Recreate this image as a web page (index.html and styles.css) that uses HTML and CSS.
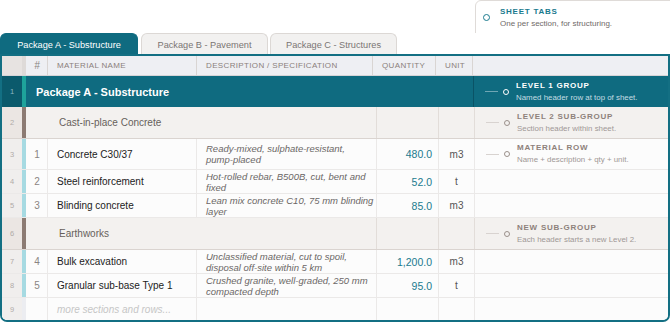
FILE: index.html
```html
<!DOCTYPE html>
<html>
<head>
<meta charset="utf-8">
<link rel="stylesheet" href="styles.css">
</head>
<body>
<div class="topbar">
  <div class="callout">
    <span class="dot dot-teal"></span>
    <div class="note">
      <div class="note-title t-teal">SHEET TABS</div>
      <div class="note-desc d-grey">One per section, for structuring.</div>
    </div>
  </div>
</div>
<div class="tabs">
  <div class="tab tab-a">Package A - Substructure</div>
  <div class="tab tab-b">Package B - Pavement</div>
  <div class="tab tab-c">Package C - Structures</div>
</div>
<div class="sheet">
  <div class="row r-head">
    <div class="c num"></div>
    <div class="c stripe"></div>
    <div class="c idx hash">#</div>
    <div class="c lbl">MATERIAL NAME</div>
    <div class="c lbl">DESCRIPTION / SPECIFICATION</div>
    <div class="c lbl">QUANTITY</div>
    <div class="c lbl">UNIT</div>
    <div class="c"></div>
  </div>

  <div class="row r-l1">
    <div class="c num">1</div>
    <div class="c stripe"></div>
    <div class="c l1-label">Package A - Substructure</div>
    <div class="c annot annot-l1">
      <span class="leader"></span><span class="dot"></span>
      <div class="note">
        <div class="note-title">LEVEL 1 GROUP</div>
        <div class="note-desc">Named header row at top of sheet.</div>
      </div>
    </div>
  </div>

  <div class="row r-l2">
    <div class="c num">2</div>
    <div class="c stripe"></div>
    <div class="c l2-label">Cast-in-place Concrete</div>
    <div class="c"></div>
    <div class="c"></div>
    <div class="c annot">
      <span class="leader"></span><span class="dot"></span>
      <div class="note">
        <div class="note-title">LEVEL 2 SUB-GROUP</div>
        <div class="note-desc">Section header within sheet.</div>
      </div>
    </div>
  </div>

  <div class="row r-mat r-tall">
    <div class="c num">3</div>
    <div class="c stripe"></div>
    <div class="c idx">1</div>
    <div class="c name">Concrete C30/37</div>
    <div class="c desc">Ready-mixed, sulphate-resistant,<br>pump-placed</div>
    <div class="c qty">480.0</div>
    <div class="c unit">m3</div>
    <div class="c annot">
      <span class="leader"></span><span class="dot"></span>
      <div class="note">
        <div class="note-title">MATERIAL ROW</div>
        <div class="note-desc">Name + description + qty + unit.</div>
      </div>
    </div>
  </div>

  <div class="row r-mat">
    <div class="c num">4</div>
    <div class="c stripe"></div>
    <div class="c idx">2</div>
    <div class="c name">Steel reinforcement</div>
    <div class="c desc">Hot-rolled rebar, B500B, cut, bent and<br>fixed</div>
    <div class="c qty">52.0</div>
    <div class="c unit">t</div>
    <div class="c"></div>
  </div>

  <div class="row r-mat">
    <div class="c num">5</div>
    <div class="c stripe"></div>
    <div class="c idx">3</div>
    <div class="c name">Blinding concrete</div>
    <div class="c desc">Lean mix concrete C10, 75 mm blinding<br>layer</div>
    <div class="c qty">85.0</div>
    <div class="c unit">m3</div>
    <div class="c"></div>
  </div>

  <div class="row r-l2">
    <div class="c num">6</div>
    <div class="c stripe"></div>
    <div class="c l2-label">Earthworks</div>
    <div class="c"></div>
    <div class="c"></div>
    <div class="c annot">
      <span class="leader"></span><span class="dot"></span>
      <div class="note">
        <div class="note-title">NEW SUB-GROUP</div>
        <div class="note-desc">Each header starts a new Level 2.</div>
      </div>
    </div>
  </div>

  <div class="row r-mat">
    <div class="c num">7</div>
    <div class="c stripe"></div>
    <div class="c idx">4</div>
    <div class="c name">Bulk excavation</div>
    <div class="c desc">Unclassified material, cut to spoil,<br>disposal off-site within 5 km</div>
    <div class="c qty">1,200.0</div>
    <div class="c unit">m3</div>
    <div class="c"></div>
  </div>

  <div class="row r-mat">
    <div class="c num">8</div>
    <div class="c stripe"></div>
    <div class="c idx">5</div>
    <div class="c name">Granular sub-base Type 1</div>
    <div class="c desc">Crushed granite, well-graded, 250 mm<br>compacted depth</div>
    <div class="c qty">95.0</div>
    <div class="c unit">t</div>
    <div class="c"></div>
  </div>

  <div class="row r-mat r-more">
    <div class="c num">9</div>
    <div class="c stripe"></div>
    <div class="c idx"></div>
    <div class="c name more">more sections and rows...</div>
    <div class="c desc"></div>
    <div class="c qty"></div>
    <div class="c unit"></div>
    <div class="c"></div>
  </div>
</div>
</body>
</html>
```

FILE: styles.css
```css
* { box-sizing: border-box; margin: 0; padding: 0; }

body {
  margin: 0;
  width: 670px;
  height: 324px;
  overflow: hidden;
  background: #ffffff;
  font-family: "Liberation Sans", Arial, Helvetica, sans-serif;
  color: #222;
}

/* ---------- callout ---------- */
.topbar {
  height: 33px;
  display: flex;
  padding-left: 475px;
  overflow: hidden;
}
.callout {
  flex: 1;
  margin-right: -8px;
  height: 44px;
  border: 1px solid #dfdbd8;
  border-radius: 6px;
  background: #fff;
  display: flex;
  align-items: flex-start;
  gap: 10px;
  padding: 5px 0 0 7px;
}
.callout .dot { margin-top: 8px; }

.note { display: flex; flex-direction: column; white-space: nowrap; }
.note-title {
  font-size: 8px;
  font-weight: bold;
  letter-spacing: 0.75px;
  line-height: 12px;
  color: #8e817b;
}
.note-desc {
  font-size: 7.9px;
  line-height: 12px;
  color: #9f9896;
}
.t-teal { color: #1a7a8e; }
.d-grey { color: #6f6a68; font-size: 8px; }

.dot {
  width: 6px;
  height: 6px;
  flex: none;
  border-radius: 50%;
  border: 1.2px solid #9b908b;
}
.dot-teal { border: 1.5px solid #1a7a8e; width: 7px; height: 7px; }

/* ---------- tabs ---------- */
.tabs {
  display: flex;
  gap: 3px;
  height: 21px;
}
.tab {
  height: 21px;
  border: 1px solid #dcd8d5;
  border-bottom: none;
  border-radius: 6px 6px 0 0;
  background: #f2f1f0;
  color: #7a7573;
  font-size: 9.2px;
  display: flex;
  align-items: center;
  justify-content: center;
  padding-top: 2px;
  white-space: nowrap;
}
.tab-a { width: 138px; background: #0f6b80; border-color: #0f6b80; color: #fff; }
.tab-b { width: 127px; }
.tab-c { width: 127px; margin-left: -1px; }

/* ---------- sheet ---------- */
.sheet {
  height: 268px;
  border: 2px solid #136f83;
  border-radius: 0 0 7px 7px;
  overflow: hidden;
  background: #fcfcfc;
}

.row {
  display: grid;
  grid-template-columns: 20px 4px 22px 149px 180px 62px 36px 1fr;
  align-items: stretch;
  border-bottom: 1px solid #ebe9e8;
}
.c {
  display: flex;
  align-items: center;
  min-width: 0;
  white-space: nowrap;
}
.num {
  justify-content: center;
  font-size: 7.5px;
  color: #b1aba8;
  background: #f0eeed;
}

/* header */
.r-head {
  height: 20px;
  grid-template-columns: 20px 4px 22px 149px 176px 63px 37px 1fr;
  background: #eeeff3;
  border-bottom: 1px solid #d6d4d7;
}
.r-head .num { background: #e7e3e1; }
.r-head .stripe { background: #dedad8; }
.r-head .c:nth-child(n+3):nth-child(-n+7) { border-right: 1px solid #d9d5d3; }
.lbl {
  padding-left: 9px;
  font-size: 8px;
  letter-spacing: 0.35px;
  color: #8b807b;
}
.hash { font-style: italic; font-size: 8px; color: #9c9592; }

/* level 1 */
.r-l1 {
  height: 31px;
  grid-template-columns: 20px 4px 447px 1fr;
  background: #0f6b80;
  border-bottom: none;
}
.r-l1 .num { background: #0b5a6c; color: #8db8c3; }
.r-l1 .stripe { background: #1ea39b; }
.l1-label {
  padding-left: 10px;
  font-size: 11px;
  font-weight: bold;
  color: #fff;
}
.annot-l1 { border-left: 1px solid #0a5366; padding-left: 13px; }
.r-l1 .leader { background: #6fa6b4; }
.r-l1 .dot { border-color: #ffffff; }
.r-l1 .note-title { color: #ffffff; }
.r-l1 .note-desc { color: #c4dde3; }

/* level 2 */
.r-l2 {
  height: 32px;
  grid-template-columns: 20px 4px 351px 62px 36px 1fr;
  background: #f3f1ef;
  border-bottom: 1px solid #dad4d0;
}
.r-l2 .num { background: #ebe6e3; }
.r-l2 .stripe { background: #8c7b73; }
.r-l2 .c:nth-child(n+3):nth-child(-n+5) { border-right: 1px solid #e2ddd9; }
.l2-label {
  padding-left: 33px;
  font-size: 10px;
  color: #675f5b;
}

/* material rows */
.r-mat { height: 24px; background: #fcfcfc; }
.r-tall { height: 31px; }
.r-mat .stripe { background: #a6dae2; }
.r-mat .c:nth-child(n+3):nth-child(-n+7) { border-right: 1px solid #ebe9e8; }
.idx {
  justify-content: center;
  font-size: 10px;
  color: #8a8482;
  padding-left: 1px;
}
.name { padding-left: 9px; font-size: 10px; color: #222; }
.desc {
  padding-left: 9px;
  font-size: 9.5px;
  line-height: 11px;
  font-style: italic;
  color: #6b6766;
}
.qty {
  justify-content: flex-end;
  padding-right: 6px;
  font-size: 10.5px;
  color: #1b7a8e;
}
.unit { justify-content: center; font-size: 10px; color: #555; }
.r-more { height: 22px; border-bottom: none; }
.r-more .stripe { background: #ecedf1; }
.more { font-style: italic; color: #c6c6c6; }

/* annotations */
.annot {
  padding-left: 11px;
  gap: 0;
}
.leader {
  width: 13px;
  height: 1px;
  flex: none;
  background: #d8d3d0;
  margin-right: 5px;
}
.annot .dot { margin-right: 7px; }
```
